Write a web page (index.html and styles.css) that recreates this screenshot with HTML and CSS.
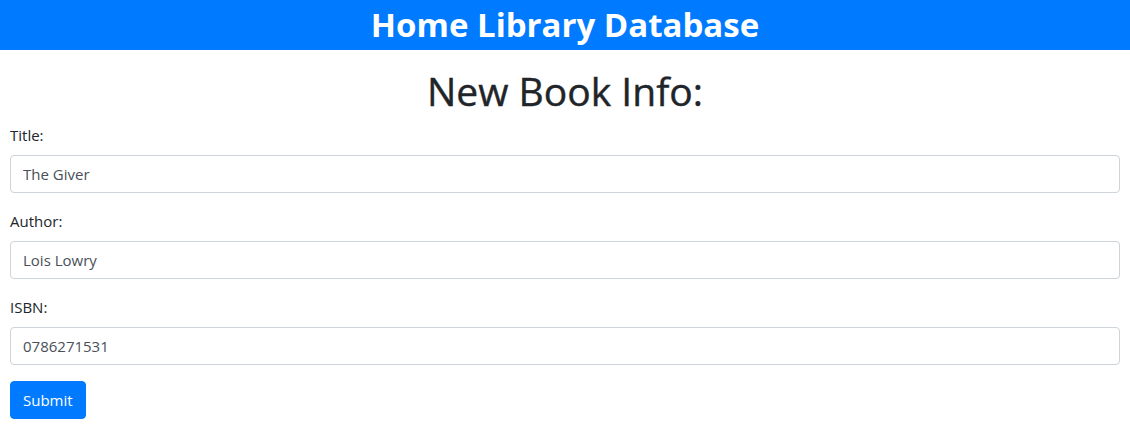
FILE: index.html
```html
<!DOCTYPE html>
<html>
<head>
<meta charset="utf-8">
<link rel="stylesheet" href="styles.css">
</head>
<body>
<header class="banner"><h1 class="banner-title">Home Library Database</h1></header>
<main class="page">
  <h2 class="page-title">New Book Info:</h2>
  <form class="book-form">
    <div class="form-group">
      <label class="form-label">Title:</label>
      <input class="form-input" type="text" value="The Giver">
    </div>
    <div class="form-group">
      <label class="form-label">Author:</label>
      <input class="form-input" type="text" value="Lois Lowry">
    </div>
    <div class="form-group">
      <label class="form-label">ISBN:</label>
      <input class="form-input" type="text" value="0786271531">
    </div>
    <button class="btn-submit" type="button">Submit</button>
  </form>
</main>
</body>
</html>
```
FILE: styles.css
```css
* { box-sizing: border-box; }
body {
  margin: 0;
  font-family: "Open Sans", "Noto Sans", sans-serif;
  font-size: 15px;
  color: #212529;
  background: #fff;
}
.banner {
  background: #007bff;
  height: 50px;
  display: flex;
  align-items: center;
  justify-content: center;
}
.banner-title {
  margin: 0;
  color: #fff;
  font-size: 33px;
  font-weight: 700;
  line-height: 50px;
}
.page {
  padding: 0 10px;
}
.page-title {
  margin: 17px 0 8px;
  text-align: center;
  font-size: 39px;
  font-weight: 400;
  -webkit-text-stroke: 0.4px #212529;
  line-height: 48px;
}
.book-form {
  display: flex;
  flex-direction: column;
  align-items: flex-start;
}
.form-group {
  width: 100%;
  margin-bottom: 16px;
  display: flex;
  flex-direction: column;
}
.form-label {
  line-height: 24px;
  margin-bottom: 8px;
}
.form-input {
  height: 38px;
  padding: 6px 12px;
  border: 1px solid #ced4da;
  border-radius: 4px;
  font: inherit;
  color: #495057;
  width: 100%;
}
.btn-submit {
  height: 38px;
  padding: 6px 12px;
  background: #007bff;
  color: #fff;
  border: 1px solid #007bff;
  border-radius: 4px;
  font: inherit;
  line-height: 24px;
}
```
